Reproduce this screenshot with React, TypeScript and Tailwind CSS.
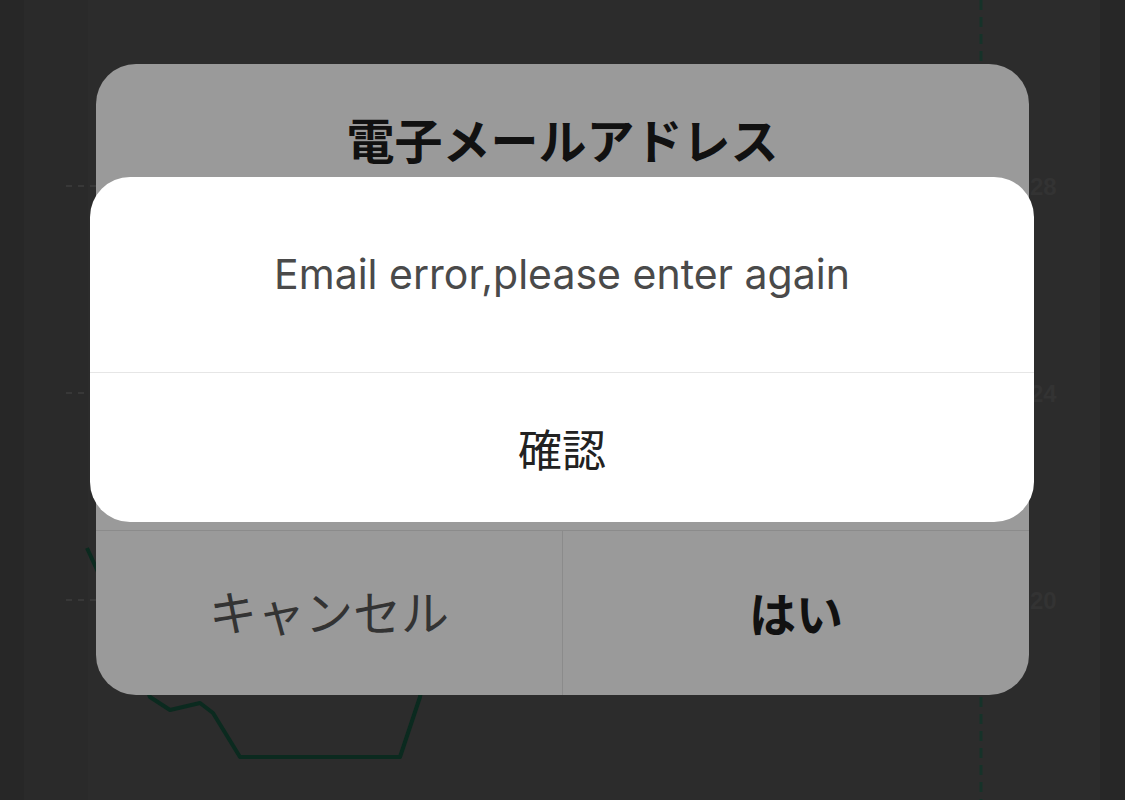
import React from "react";

const JP = "font-['Noto_Sans_CJK_JP','Noto_Sans',sans-serif]";

function ChartBackdrop() {
    return (
        <svg
            className="absolute inset-0"
            width={1125}
            height={800}
            viewBox="0 0 1125 800"
            fill="none"
        >
            {/* grid lines */}
            {[186, 393, 600].map((y) => (
                <line
                    key={y}
                    x1={66}
                    y1={y}
                    x2={1020}
                    y2={y}
                    stroke="#383838"
                    strokeWidth={2}
                    strokeDasharray="6 6"
                />
            ))}
            {/* axis labels */}
            <text x={1030} y={195} fill="#333" fontSize={24} fontWeight={700} fontFamily="Liberation Sans, sans-serif">
                28
            </text>
            <text x={1030} y={402} fill="#333" fontSize={24} fontWeight={700} fontFamily="Liberation Sans, sans-serif">
                24
            </text>
            <text x={1030} y={609} fill="#333" fontSize={24} fontWeight={700} fontFamily="Liberation Sans, sans-serif">
                20
            </text>
            {/* vertical marker */}
            <line
                x1={981}
                y1={0}
                x2={981}
                y2={800}
                stroke="#163229"
                strokeWidth={3}
                strokeDasharray="10 7"
            />
            {/* price line */}
            <polyline
                points="87,548 120,620 150,697 170,710 200,703 213,713 240,757 400,757 420,697 440,560"
                stroke="#0b2a1f"
                strokeWidth={4}
                strokeLinejoin="round"
            />
        </svg>
    );
}

export default function App() {
    return (
        <div className="relative w-[1125px] h-[800px] overflow-hidden bg-[#272727]">
            <div className="flex h-full">
                <div className="w-[24px] bg-[#272727]" />
                <div className="flex-1 flex bg-[#2a2a2a]">
                    <div className="w-[64px]" />
                    <div className="flex-1 bg-[#2c2c2c]" />
                </div>
                <div className="w-[25px] bg-[#272727]" />
            </div>

            <ChartBackdrop />

            {/* underlying confirm dialog */}
            <div className="absolute left-[96px] top-[64px] w-[933px] h-[631px] rounded-[40px] bg-[#9a9a9a] flex flex-col overflow-hidden">
                <div className={`h-[148px] flex items-center justify-center ${JP}`}>
                    <span className="text-[48px] font-bold text-[#111] leading-none">電子メールアドレス</span>
                </div>
                <div className="flex-1" />
                <div className="h-[165px] border-t border-[#8b8b8b] flex">
                    <div className={`flex-1 flex items-center justify-center pb-[6px] ${JP}`}>
                        <span className="text-[48px] text-[#333] leading-none">キャンセル</span>
                    </div>
                    <div className="w-px bg-[#8b8b8b]" />
                    <div className={`flex-1 flex items-center justify-center pb-[4px] ${JP}`}>
                        <span className="text-[47px] font-bold text-[#111] leading-none">はい</span>
                    </div>
                </div>
            </div>

            {/* error alert */}
            <div className="absolute left-[90px] top-[177px] w-[944px] h-[345px] rounded-[40px] bg-white flex flex-col overflow-hidden">
                <div className="h-[195px] flex items-center justify-center">
                    <span className="text-[41px] text-[#4a4a4a] leading-none font-['Inter','Noto_Sans',sans-serif]">
                        Email error,please enter again
                    </span>
                </div>
                <div className="h-px bg-[#e6e6e6]" />
                <div className={`flex-1 flex items-center justify-center ${JP}`}>
                    <span className="text-[44px] text-[#222] leading-none">確認</span>
                </div>
            </div>
        </div>
    );
}
